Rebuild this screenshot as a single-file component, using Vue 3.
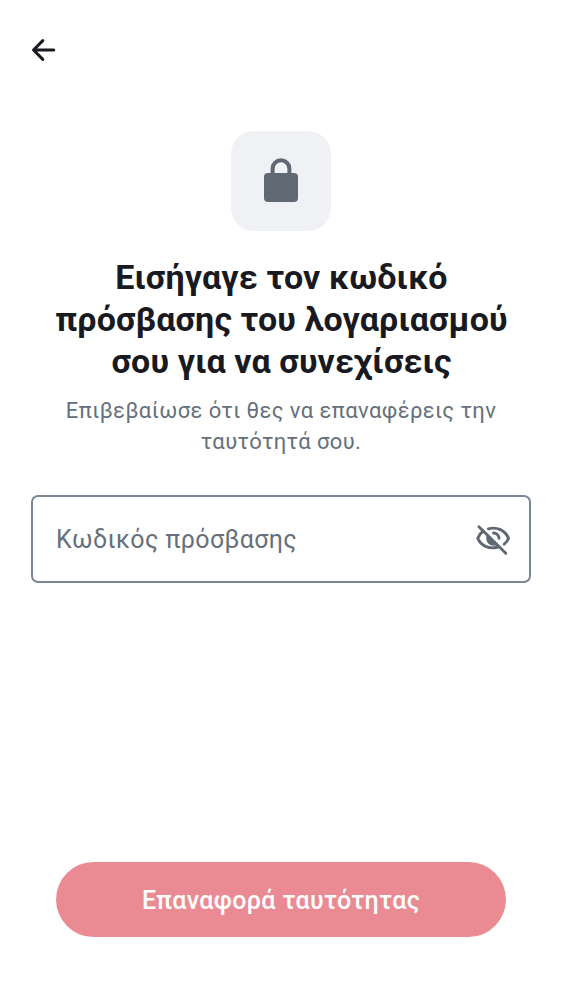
<script setup>
const title = ['Εισήγαγε τον κωδικό', 'πρόσβασης του λογαριασμού', 'σου για να συνεχίσεις']
const description = ['Επιβεβαίωσε ότι θες να επαναφέρεις την', 'ταυτότητά σου.']
</script>

<template>
  <main class="screen">
    <button class="back" aria-label="Πίσω">
      <svg viewBox="0 0 26 24" width="26" height="24"><path d="M22.8 12H3M11.8 2.6 2.5 12 11.8 21.4" fill="none" stroke="currentColor" stroke-width="3" stroke-linecap="round" stroke-linejoin="round" /></svg>
    </button>
    <div class="badge">
      <svg viewBox="0 0 34 46" width="34" height="46"><path d="M8.6 18v-6.3a8.4 8.4 0 0 1 16.8 0V18" fill="none" stroke="currentColor" stroke-width="4" /><rect y="16" width="34" height="29" rx="4" fill="currentColor" /></svg>
    </div>
    <h1><span v-for="line in title" :key="line">{{ line }}</span></h1>
    <p class="description"><span v-for="line in description" :key="line">{{ line }}</span></p>
    <div class="field">
      <span class="label">Κωδικός πρόσβασης</span>
      <svg class="eye" viewBox="0 0 36 36" width="36" height="36">
        <g transform="translate(0 .7)">
          <g fill="none" stroke="currentColor" stroke-width="2.9" stroke-linecap="round" stroke-linejoin="round">
            <path d="M3.9 5 30.8 31.5" />
            <path d="M13.4 7.1C22 4.9 30 8.3 33.6 16.6c-.9 2.2-2.3 4.2-4.4 5.8" />
            <path d="M8.2 9.3C5.7 11.1 3.9 13.7 2.8 16.6 6 24 13.7 28 23 25.3" />
            <path d="M18.5 11.3c3 .1 5.3 2.3 5.5 5.4" />
          </g>
          <path d="M12.4 12.3 22.8 22.7c-3 2-7 1.6-9.5-1-2.5-2.6-2.8-6.4-.9-9.4Z" fill="currentColor" />
        </g>
      </svg>
    </div>
    <button class="submit">Επαναφορά ταυτότητας</button>
  </main>
</template>

<style>
body { background: #fff; }
</style>

<style scoped>
.screen { box-sizing: border-box; width: 562px; height: 1000px; padding: 38px 31px 63px; display: flex; flex-direction: column; align-items: center; font-family: Roboto, sans-serif; background: #fff; }
button { border: 0; padding: 0; font: inherit; }
svg { display: block; }
.back { align-self: flex-start; width: 26px; height: 24px; background: none; color: #191a21; }
.badge { box-sizing: border-box; width: 100px; height: 100px; margin-top: 69px; padding-top: 26px; border-radius: 23px; background: #f0f1f5; color: #606874; display: flex; justify-content: center; }
h1 { margin: 25px 0 0; padding-left: 1px; font-size: 34px; line-height: 42px; font-weight: 700; letter-spacing: .14px; color: #191a21; text-align: center; white-space: nowrap; }
h1 span, .description span { display: block; }
.description { margin: 13px 0 0; font-size: 22px; line-height: 31px; letter-spacing: .39px; color: #65707c; text-align: center; white-space: nowrap; }
.field { box-sizing: border-box; width: 500px; height: 88px; margin-top: 38px; padding: 0 18px 0 23px; border: 2px solid #7b8796; border-radius: 7px; color: #606874; display: flex; align-items: center; justify-content: space-between; }
.label { font-size: 25px; letter-spacing: .38px; color: #65707c; }
.submit { box-sizing: border-box; width: 450px; height: 75px; margin-top: auto; padding-top: 2px; border-radius: 38px; background: #ea8b93; color: #fff; font-size: 25px; font-weight: 500; letter-spacing: .35px; }
</style>
